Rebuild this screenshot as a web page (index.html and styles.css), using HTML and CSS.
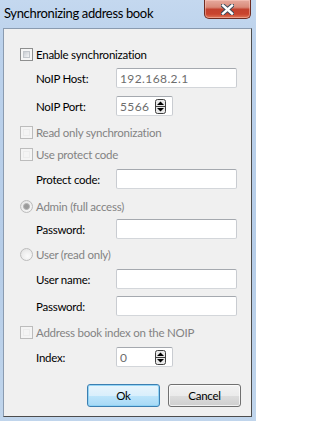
FILE: index.html
```html
<!DOCTYPE html>
<html>
<head>
<meta charset="utf-8">
<link rel="stylesheet" href="styles.css">
</head>
<body>
<div class="window">
  <div class="titlebar">
    <span class="title">Synchronizing address book</span>
    <div class="close">
      <svg width="13" height="11" viewBox="0 0 13 11">
        <path d="M2 1.5 L11 9.5 M11 1.5 L2 9.5" stroke="#3d4a5a" stroke-width="4.4" stroke-linecap="square"/>
        <path d="M2 1.5 L11 9.5 M11 1.5 L2 9.5" stroke="#ffffff" stroke-width="2.4" stroke-linecap="square"/>
      </svg>
    </div>
  </div>
  <div class="client">
    <div class="check-row">
      <span class="cb"></span><span class="txt">Enable synchronization</span>
    </div>
    <div class="field-row sp6">
      <span class="lbl">NoIP Host:</span>
      <div class="input"><span class="val">192.168.2.1</span></div>
    </div>
    <div class="field-row sp8">
      <span class="lbl">NoIP Port:</span>
      <div class="input spin"><span class="val">5566</span>
        <svg class="spinbtn" width="11" height="15" viewBox="0 0 11 15">
          <rect x="0.5" y="0.5" width="10" height="14" rx="2" fill="#e9e9e9" stroke="#3f3f3f"/>
          <line x1="0.5" y1="7.5" x2="10.5" y2="7.5" stroke="#3f3f3f"/>
          <path d="M2 6 L5.5 2.5 L9 6 Z" fill="#000"/>
          <path d="M2 9 L5.5 12.5 L9 9 Z" fill="#000"/>
        </svg>
      </div>
    </div>
    <div class="check-row sp8 off">
      <span class="cb"></span><span class="txt">Read only synchronization</span>
    </div>
    <div class="check-row sp6 off">
      <span class="cb"></span><span class="txt">Use protect code</span>
    </div>
    <div class="field-row sp7">
      <span class="lbl">Protect code:</span>
      <div class="input"></div>
    </div>
    <div class="check-row sp9 off">
      <span class="rb checked"></span><span class="txt">Admin (full access)</span>
    </div>
    <div class="field-row sp5">
      <span class="lbl">Password:</span>
      <div class="input"></div>
    </div>
    <div class="check-row sp7 off">
      <span class="rb"></span><span class="txt">User (read only)</span>
    </div>
    <div class="field-row sp7">
      <span class="lbl">User name:</span>
      <div class="input"></div>
    </div>
    <div class="field-row sp7">
      <span class="lbl">Password:</span>
      <div class="input"></div>
    </div>
    <div class="check-row sp8 off">
      <span class="cb"></span><span class="txt">Address book index on the NOIP</span>
    </div>
    <div class="field-row sp7">
      <span class="lbl">Index:</span>
      <div class="input spin"><span class="val">0</span>
        <svg class="spinbtn" width="11" height="15" viewBox="0 0 11 15">
          <rect x="0.5" y="0.5" width="10" height="14" rx="2" fill="#e9e9e9" stroke="#3f3f3f"/>
          <line x1="0.5" y1="7.5" x2="10.5" y2="7.5" stroke="#3f3f3f"/>
          <path d="M2 6 L5.5 2.5 L9 6 Z" fill="#000"/>
          <path d="M2 9 L5.5 12.5 L9 9 Z" fill="#000"/>
        </svg>
      </div>
    </div>
    <div class="buttons">
      <button class="btn default">Ok</button>
      <button class="btn">Cancel</button>
    </div>
  </div>
</div>
</body>
</html>
```
FILE: styles.css
```css
html, body {
  margin: 0;
  padding: 0;
  width: 256px;
  height: 421px;
  overflow: hidden;
}

.window {
  box-sizing: border-box;
  width: 256px;
  height: 421px;
  padding: 0 4px 4px 3px;
  display: flex;
  flex-direction: column;
  background: linear-gradient(180deg, #c4d8ef 0%, #bcd2ec 10%, #b6cde8 60%, #c0d5ec 100%);
  font-family: Lato, "Liberation Sans", sans-serif;
  font-size: 11.5px;
  letter-spacing: -0.25px;
  color: #000;
}

.titlebar {
  height: 28px;
  flex: none;
  display: flex;
  justify-content: space-between;
  align-items: flex-start;
}

.title {
  margin-left: 1px;
  margin-top: 5px;
  font-size: 13px;
  letter-spacing: -0.35px;
  line-height: 17px;
  color: #000;
}

.close {
  box-sizing: border-box;
  width: 47px;
  height: 19px;
  margin-right: 1px;
  border: 1px solid #6e2c22;
  border-top: none;
  border-radius: 0 0 5px 5px;
  background: linear-gradient(180deg, #e6aa9e 0%, #d98a79 40%, #c3422f 52%, #c9442e 78%, #df7658 100%);
  box-shadow: inset 0 0 0 1px rgba(255, 210, 200, 0.45);
  display: flex;
  align-items: center;
  justify-content: center;
}

.client {
  flex: 1;
  box-sizing: border-box;
  background: #f0f0f0;
  border: 1px solid;
  border-color: #8a9bb0 #4d4d4d #4d4d4d #8a9bb0;
  padding: 17px 10px 0 16px;
  display: flex;
  flex-direction: column;
}

.check-row {
  height: 16px;
  display: flex;
  align-items: center;
  gap: 3px;
}

.check-row.off .txt {
  color: #838383;
}

.field-row {
  height: 20px;
  display: flex;
  align-items: center;
  padding-left: 16px;
}

.sp5 { margin-top: 5px; }
.sp6 { margin-top: 6px; }
.sp7 { margin-top: 7px; }
.sp8 { margin-top: 8px; }
.sp9 { margin-top: 9px; }

.lbl {
  width: 80px;
  flex: none;
}

.input {
  box-sizing: border-box;
  width: 121px;
  height: 20px;
  background: #fff;
  border: 1px solid #acb0b6;
  border-color: #a5a9af #c9ccd1 #d3d6da #c9ccd1;
  border-radius: 2px;
  display: flex;
  align-items: center;
  justify-content: space-between;
  padding: 0 6px 0 3px;
}

.input.spin {
  width: 57px;
}

.val {
  color: #6d6d6d;
  font-size: 12px;
  letter-spacing: 0.4px;
}

.spinbtn {
  display: block;
}

.cb {
  box-sizing: border-box;
  width: 13px;
  height: 13px;
  flex: none;
  border: 1px solid #8e8f8f;
  background: #f6f6f6;
  padding: 2px;
  display: flex;
}

.cb::after {
  content: "";
  flex: 1;
  border: 1px solid #c3c7cc;
  background: linear-gradient(135deg, #c9cdd2 0%, #e3e5e8 60%, #f3f4f5 100%);
}

.off .cb {
  border-color: #bcbcbc;
  background: #f4f4f4;
}

.off .cb::after {
  border-color: #ececec;
  background: #f4f4f4;
}

.rb {
  box-sizing: border-box;
  width: 13px;
  height: 13px;
  flex: none;
  border: 1px solid #bcbcbc;
  border-radius: 50%;
  background: radial-gradient(circle at 60% 65%, #fafafa 0%, #eeeeee 50%, #dcdcdc 100%);
  display: flex;
  align-items: center;
  justify-content: center;
}

.rb.checked::after {
  content: "";
  width: 5px;
  height: 5px;
  border-radius: 50%;
  background: #9a9a9a;
  border: 1px solid #b3b3b3;
}

.buttons {
  margin-top: 17px;
  display: flex;
  justify-content: flex-end;
  gap: 8px;
}

.btn {
  box-sizing: border-box;
  width: 73px;
  height: 23px;
  margin: 0;
  padding: 0;
  font-family: Lato, "Liberation Sans", sans-serif;
  font-size: 11.5px;
  letter-spacing: -0.25px;
  color: #000;
  border: 1px solid #707070;
  border-radius: 3px;
  background: linear-gradient(180deg, #f2f2f2 0%, #ebebeb 50%, #dddddd 51%, #cfcfcf 100%);
  box-shadow: inset 0 0 0 1px rgba(255, 255, 255, 0.7);
}

.btn.default {
  border-color: #3c7fb1;
  background: linear-gradient(180deg, #e9f5fc 0%, #d9effc 50%, #bde5fb 51%, #a7d9f5 100%);
  box-shadow: inset 0 0 0 1px rgba(140, 210, 245, 0.9);
}
```
